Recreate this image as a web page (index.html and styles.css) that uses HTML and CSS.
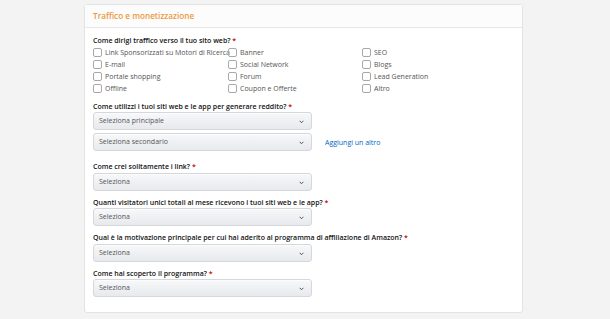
FILE: index.html
```html
<!DOCTYPE html>
<html lang="it">
<head>
    <meta charset="UTF-8">
    <title>Traffico e monetizzazione</title>
    <link rel="stylesheet" href="styles.css">
</head>
<body>
    <div class="card">
        <div class="card-head">Traffico e monetizzazione</div>
        <div class="card-body">
            <div class="field">
                <div class="label">Come dirigi traffico verso il tuo sito web? <span class="req">*</span></div>
                <div class="checks">
                    <label class="check"><span class="box"></span>Link Sponsorizzati su Motori di Ricerca</label>
                    <label class="check"><span class="box"></span>Banner</label>
                    <label class="check"><span class="box"></span>SEO</label>
                    <label class="check"><span class="box"></span>E-mail</label>
                    <label class="check"><span class="box"></span>Social Network</label>
                    <label class="check"><span class="box"></span>Blogs</label>
                    <label class="check"><span class="box"></span>Portale shopping</label>
                    <label class="check"><span class="box"></span>Forum</label>
                    <label class="check"><span class="box"></span>Lead Generation</label>
                    <label class="check"><span class="box"></span>Offline</label>
                    <label class="check"><span class="box"></span>Coupon e Offerte</label>
                    <label class="check"><span class="box"></span>Altro</label>
                </div>
            </div>

            <div class="field field-group">
                <div class="label">Come utilizzi i tuoi siti web e le app per generare reddito? <span class="req">*</span></div>
                <div class="select-row">
                    <div class="select">Seleziona principale<svg class="chev" viewBox="0 0 8 5"><path d="M1 1l3 3 3-3" /></svg></div>
                </div>
                <div class="select-row">
                    <div class="select">Seleziona secondario<svg class="chev" viewBox="0 0 8 5"><path d="M1 1l3 3 3-3" /></svg></div>
                    <a class="add-link" href="#">Aggiungi un altro</a>
                </div>
            </div>

            <div class="field">
                <div class="label">Come crei solitamente i link? <span class="req">*</span></div>
                <div class="select">Seleziona<svg class="chev" viewBox="0 0 8 5"><path d="M1 1l3 3 3-3" /></svg></div>
            </div>

            <div class="field">
                <div class="label">Quanti visitatori unici totali al mese ricevono i tuoi siti web e le app? <span class="req">*</span></div>
                <div class="select">Seleziona<svg class="chev" viewBox="0 0 8 5"><path d="M1 1l3 3 3-3" /></svg></div>
            </div>

            <div class="field">
                <div class="label">Qual è la motivazione principale per cui hai aderito al programma di affiliazione di Amazon? <span class="req">*</span></div>
                <div class="select">Seleziona<svg class="chev" viewBox="0 0 8 5"><path d="M1 1l3 3 3-3" /></svg></div>
            </div>

            <div class="field">
                <div class="label">Come hai scoperto il programma? <span class="req">*</span></div>
                <div class="select">Seleziona<svg class="chev" viewBox="0 0 8 5"><path d="M1 1l3 3 3-3" /></svg></div>
            </div>
        </div>
    </div>
</body>
</html>
```

FILE: styles.css
```css
body {
    margin: 0;
    padding: 4px 0 0 84px;
    background: #f3f3f3;
    font-family: "Open Sans", "Noto Sans", sans-serif;
    color: #111;
}
.card {
    width: 439px;
    height: 309px;
    background: #fff;
    border: 1px solid #e3e3e3;
    border-radius: 3px;
    box-sizing: border-box;
}
.card-head {
    height: 22px;
    line-height: 22px;
    padding-left: 8px;
    background: #fcfcfc;
    border-bottom: 1px solid #e6e6e6;
    color: #eb9a3c;
    font-size: 8.2px;
    font-weight: 600;
}
.card-body {
    padding: 7.5px 8px 0 8px;
}
.field {
    margin-bottom: 7px;
}
.field-group {
    margin-bottom: 11px;
}
.label {
    font-size: 7px;
    font-weight: 600;
    line-height: 9px;
    margin-bottom: 1.5px;
}
.req {
    color: #c40000;
}
.checks {
    display: grid;
    grid-template-columns: 135px 134px 1fr;
    row-gap: 3px;
    margin-top: 3px;
    padding-bottom: 2px;
}
.check {
    display: flex;
    align-items: center;
    height: 9px;
    font-size: 7px;
    color: #555;
    white-space: nowrap;
}
.box {
    width: 9px;
    height: 9px;
    border: 1px solid #a8a8a8;
    border-radius: 2px;
    margin-right: 3px;
    flex: none;
    box-sizing: border-box;
}
.select-row {
    display: flex;
    align-items: center;
    margin-bottom: 3px;
}
.select-row:last-child {
    margin-bottom: 0;
}
.select {
    position: relative;
    width: 219px;
    height: 18px;
    line-height: 16px;
    box-sizing: border-box;
    padding-left: 5px;
    font-size: 7px;
    color: #555;
    background: linear-gradient(#f7f8fa, #e7e9ec);
    border: 1px solid #d5d7da;
    border-radius: 3px;
    box-shadow: 0 1px 0 rgba(255, 255, 255, 0.6) inset;
}
.chev {
    position: absolute;
    right: 7px;
    top: 7px;
    width: 5px;
    height: 3.5px;
    fill: none;
    stroke: #444;
    stroke-width: 1.5;
}
.add-link {
    margin-left: 13px;
    font-size: 7px;
    color: #0066c0;
    text-decoration: none;
}
```
